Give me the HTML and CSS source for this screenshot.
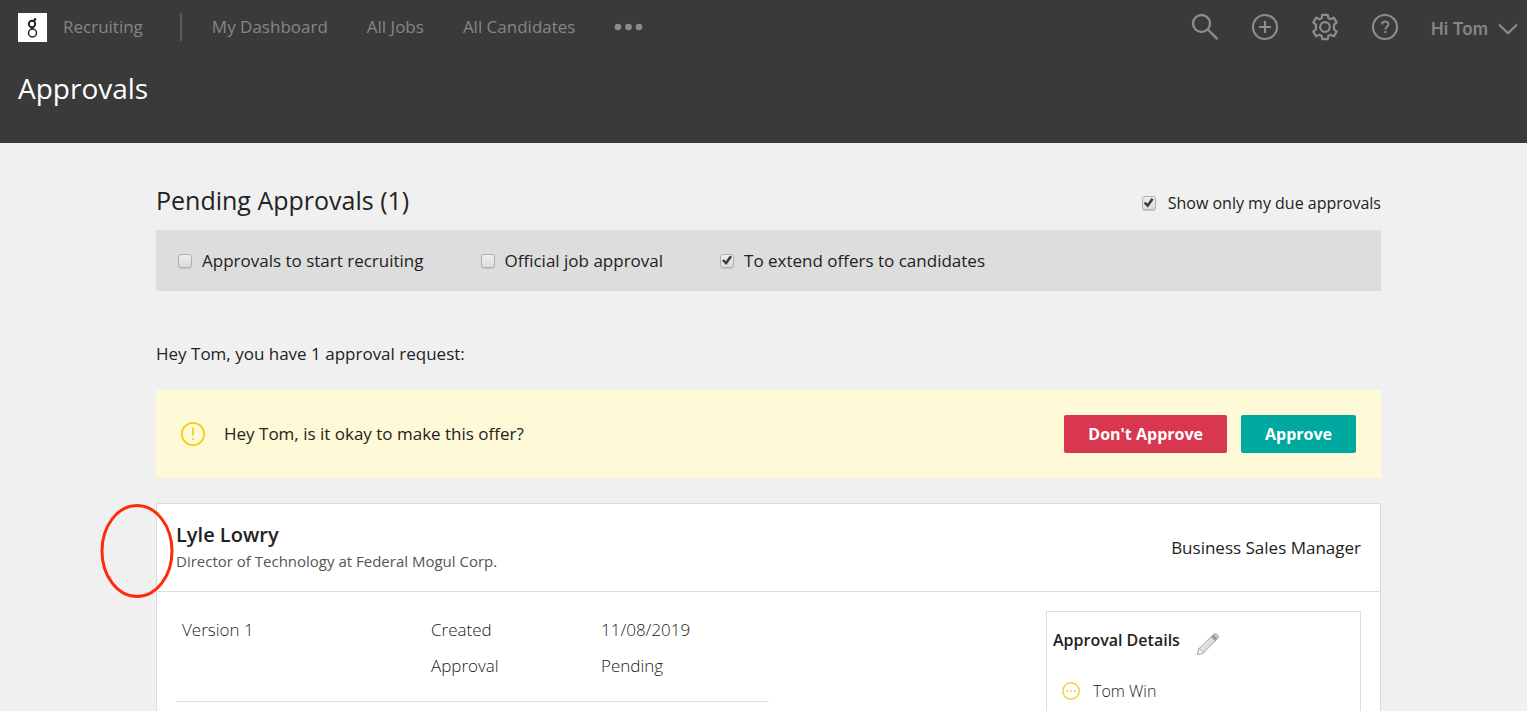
FILE: index.html
```html
<!DOCTYPE html>
<html lang="en">
<head>
<meta charset="utf-8">
<title>Approvals</title>
<link rel="stylesheet" href="styles.css">
</head>
<body>
<header class="header">
  <nav class="nav">
    <a class="brand" href="#">
      <svg class="brand-logo" viewBox="0 0 29 29" aria-hidden="true">
        <rect width="29" height="29" fill="#fff"/>
        <circle cx="14" cy="11" r="3.2" fill="none" stroke="#222" stroke-width="1.9"/>
        <circle cx="14.500" cy="20" r="4" fill="none" stroke="#222" stroke-width="1.500"/>
        <path d="M16 8.500c.2-1.500.8-1.900 1.800-1.800M14 14.500v1.500" fill="none" stroke="#222" stroke-width="1.700"/>
        <circle cx="17" cy="6.200" r="1.200" fill="#222"/>
      </svg>
      <span>Recruiting</span>
    </a>
    <div class="links">
      <a href="#">My Dashboard</a>
      <a href="#">All Jobs</a>
      <a href="#">All Candidates</a>
      <button class="icon-button more" type="button" aria-label="More">
        <svg width="30" height="8" viewBox="0 0 30 8"><g fill="#8c8c8c"><circle cx="4" cy="4" r="3.300"/><circle cx="14.500" cy="4" r="3.300"/><circle cx="25" cy="4" r="3.300"/></g></svg>
      </button>
    </div>
    <div class="tools">
      <button class="icon-button" type="button" aria-label="Search">
        <svg width="28" height="28" viewBox="0 0 28 28"><g fill="none" stroke="#8c8c8c" stroke-width="2.400"><circle cx="10.500" cy="10.500" r="8.500"/><path d="M16.800 16.500l9.700 9.700"/></g></svg>
      </button>
      <button class="icon-button" type="button" aria-label="Add">
        <svg width="28" height="28" viewBox="0 0 28 28"><g fill="none" stroke="#8c8c8c" stroke-width="2.200"><circle cx="14" cy="14" r="12"/><path d="M8 14h12M14 8v12"/></g></svg>
      </button>
      <button class="icon-button" type="button" aria-label="Settings">
        <svg width="28" height="28" viewBox="0 0 28 28"><g fill="none" stroke="#8c8c8c" stroke-width="2.200" stroke-linejoin="round"><circle cx="14" cy="14" r="4.800"/><path d="M11.200 1.900h5.600l.5 3.200 2.200 1.200 3.300-1.600 2.900 4.700-2.700 2.300v4.600l2.700 2.300-2.900 4.700-3.300-1.600-2.200 1.200-.5 3.200h-5.600l-.5-3.200-2.200-1.200-3.300 1.600-2.900-4.700 2.700-2.300v-4.600l-2.700-2.300 2.900-4.700 3.300 1.600 2.200-1.200z"/></g></svg>
      </button>
      <button class="icon-button" type="button" aria-label="Help">
        <svg width="28" height="28" viewBox="0 0 28 28"><circle cx="14" cy="14" r="12" fill="none" stroke="#8c8c8c" stroke-width="2.200"/><path d="M11 11.500c0-4 6.400-4 6.400-.2 0 2.400-3 2.500-3 5.200" fill="none" stroke="#8c8c8c" stroke-width="2"/><circle cx="14.400" cy="19" r="1.200" fill="#8c8c8c"/></svg>
      </button>
      <button class="icon-button user" type="button">
        <span>Hi Tom</span>
        <svg width="20" height="12" viewBox="0 0 20 12"><path d="M1 1.500l9 8.700 9-8.700" fill="none" stroke="#8c8c8c" stroke-width="2.200"/></svg>
      </button>
    </div>
  </nav>
  <h1 class="page-title">Approvals</h1>
</header>

<main class="content">
  <div class="heading-row">
    <h2 class="section-title">Pending Approvals (1)</h2>
    <label class="check due"><input type="checkbox" checked><span>Show only my due approvals</span></label>
  </div>
  <div class="filters">
    <label class="check"><input type="checkbox"><span>Approvals to start recruiting</span></label>
    <label class="check"><input type="checkbox"><span>Official job approval</span></label>
    <label class="check"><input type="checkbox" checked><span>To extend offers to candidates</span></label>
  </div>
  <p class="greeting">Hey Tom, you have 1 approval request:</p>

  <section class="alert">
    <svg width="26" height="26" viewBox="0 0 26 26" aria-hidden="true"><circle cx="13" cy="13" r="11.200" fill="none" stroke="#f5cc0c" stroke-width="1.700"/><path d="M13 6.500v8" stroke="#f5cc0c" stroke-width="1.700"/><circle cx="13" cy="18" r="1.100" fill="#f5cc0c"/></svg>
    <p>Hey Tom, is it okay to make this offer?</p>
    <div class="actions">
      <button class="button reject" type="button">Don't Approve</button>
      <button class="button approve" type="button">Approve</button>
    </div>
  </section>

  <article class="card">
    <svg class="marker" viewBox="0 0 76 96" aria-hidden="true"><ellipse cx="38" cy="48" rx="35" ry="45.500" fill="none" stroke="#ff2a0a" stroke-width="3"/></svg>
    <header class="card-header">
      <div>
        <h3 class="name">Lyle Lowry</h3>
        <p class="role">Director of Technology at Federal Mogul Corp.</p>
      </div>
      <p class="job">Business Sales Manager</p>
    </header>
    <div class="card-body">
      <div class="offer">
        <span>Version 1</span>
        <dl class="facts">
          <dt>Created</dt><dd>11/08/2019</dd>
          <dt>Approval</dt><dd>Pending</dd>
        </dl>
      </div>
      <aside class="details">
        <h4 class="details-title">
          <span>Approval Details</span>
          <button class="icon-button edit" type="button" aria-label="Edit">
            <svg width="24" height="24" viewBox="0 0 24 24"><path d="M1.500 22.500l1.500-6L17.500 2.500c1-1 2-1 3 0l1 1c1 1 1 2 0 3L7.500 21z" fill="#dedede" stroke="#aaa" stroke-width="1"/><path d="M1.500 22.500l1.500-6 4.500 4.500z" fill="#fff" stroke="#aaa"/><path d="M15 5l4 4 2.500-2.500-4-4z" fill="#9c9c9c"/><path d="M18.500 2l3.500 3.500c1.500-1.500-2-5-3.500-3.500z" fill="#eee" stroke="#aaa"/></svg>
          </button>
        </h4>
        <div class="approver">
          <svg width="20" height="20" viewBox="0 0 20 20" aria-hidden="true"><circle cx="10" cy="10" r="8.200" fill="none" stroke="#f3cf25" stroke-width="1.400"/><g fill="#f3cf25"><circle cx="6.200" cy="10" r="1"/><circle cx="10" cy="10" r="1"/><circle cx="13.800" cy="10" r="1"/></g></svg>
          <span>Tom Win</span>
        </div>
      </aside>
    </div>
  </article>
</main>
</body>
</html>
```
FILE: styles.css
```css
* { box-sizing: border-box; }
body {
  margin: 0;
  min-height: 100vh;
  display: flex;
  flex-direction: column;
  background: #f0f0f0;
  color: #222;
  font-family: "Open Sans", sans-serif;
  font-size: 17px;
  line-height: 24px;
}
h1, h2, h3, h4, p, dl, dd { margin: 0; }
button { font-family: inherit; cursor: pointer; }
svg { display: block; flex: none; }

.header { background: #3a3a3a; height: 143px; padding: 0 9px 0 18px; }
.nav { display: flex; align-items: center; height: 54px; color: #868686; }
.nav a { color: inherit; text-decoration: none; }
.brand { display: flex; align-items: center; gap: 16px; }
.brand-logo { width: 29px; height: 29px; }
.links {
  display: flex;
  align-items: center;
  gap: 39px;
  height: 28px;
  margin-left: 37px;
  padding-left: 30px;
  border-left: 2px solid #595959;
}
.icon-button { display: flex; align-items: center; border: 0; padding: 0; background: none; color: inherit; }
.tools { display: flex; align-items: center; gap: 32px; margin-left: auto; }
.user { gap: 10px; font-family: Inter, sans-serif; font-size: 17px; font-weight: 600; line-height: 24px; padding-top: 4px; }
.page-title { padding-top: 15px; color: #fff; font-size: 28px; font-weight: 400; line-height: 38px; }

.content { flex: 1; display: flex; flex-direction: column; padding: 39px 146px 0 156px; }
.heading-row { display: flex; align-items: center; justify-content: space-between; height: 48px; padding-bottom: 12px; }
.section-title { font-size: 25px; font-weight: 400; line-height: 36px; }
.check { display: flex; align-items: center; gap: 10px; }
.due { gap: 12px; padding-top: 6px; font-size: 16px; }
.check input {
  appearance: none;
  display: grid;
  place-items: center;
  width: 14px;
  height: 14px;
  margin: 0;
  border: 1px solid #b0b0b0;
  border-radius: 3px;
  background: linear-gradient(#eee, #dcdcdc);
  box-shadow: 0 1px 1px #c8c8c8;
}
.check input:checked::after {
  content: "";
  width: 10px;
  height: 10px;
  background: #3c3c3c;
  clip-path: polygon(0 52%, 18% 38%, 38% 58%, 78% 0, 100% 14%, 42% 95%);
}
.filters { display: flex; align-items: center; gap: 57px; height: 61px; padding: 0 22px; background: #ddd; }
.greeting { padding: 51px 0 24px; }

.alert { display: flex; align-items: center; height: 88px; padding: 0 25px 0 24px; background: #fefad8; }
.alert p { padding-left: 18px; }
.actions { display: flex; gap: 14px; margin-left: auto; }
.button { height: 38px; padding: 0 24px; border: 0; border-radius: 2px; color: #fff; font-size: 16px; font-weight: 700; }
.reject { background: #d9374f; }
.approve { background: #00a99f; }

.card { position: relative; flex: 1; margin-top: 25px; border: 1px solid #dcdcdc; border-bottom: 0; background: #fff; }
.marker { position: absolute; left: -58px; top: -1px; width: 76px; height: 96px; }
.card-header { display: flex; align-items: center; justify-content: space-between; height: 88px; padding: 0 19px; border-bottom: 1px solid #dcdcdc; }
.name { font-size: 20px; font-weight: 600; line-height: 28px; }
.role { padding-bottom: 2px; color: #555; font-size: 15px; }
.card-body { display: flex; justify-content: space-between; align-items: flex-start; padding: 19px 19px 0; }
.offer { display: flex; width: 50%; padding: 7px 0 23px 6px; border-bottom: 1px solid #dcdcdc; font-weight: 300; }
.offer > span { width: 249px; }
.facts { display: grid; grid-template-columns: 170px auto; row-gap: 12px; }
.details { width: 315px; padding: 16px 6px 8px; border: 1px solid #dcdcdc; border-bottom: 0; }
.details-title { display: flex; align-items: center; gap: 16px; font-size: 16px; font-weight: 600; }
.edit { padding-top: 4px; margin-bottom: -4px; }
.approver { display: flex; align-items: center; gap: 12px; padding: 27px 8px 0; font-size: 16px; font-weight: 300; }
```
